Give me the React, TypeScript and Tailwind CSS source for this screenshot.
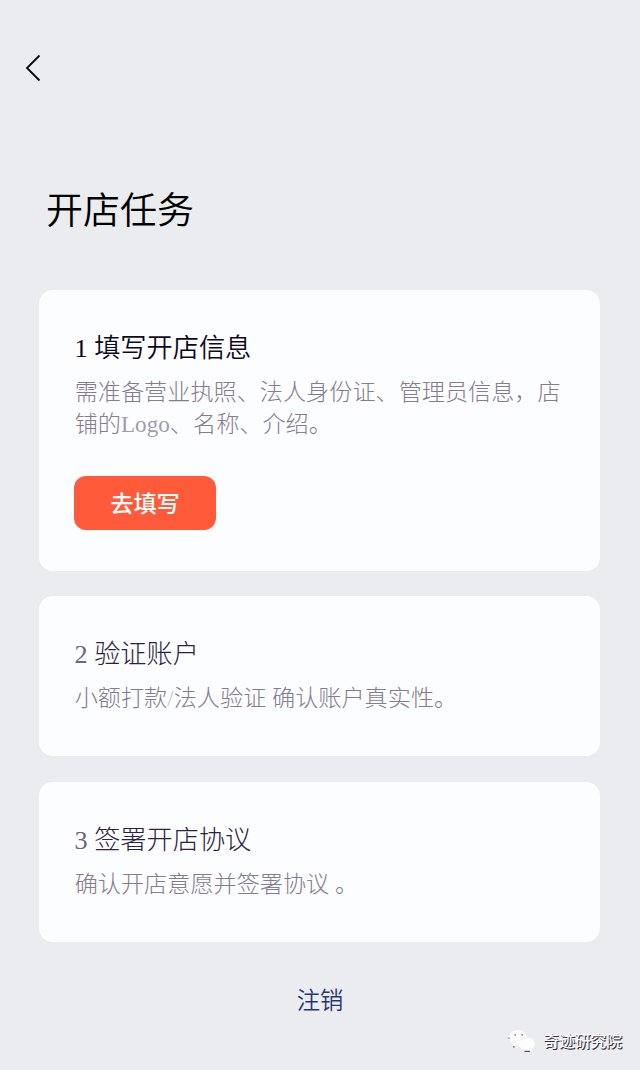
import React from 'react';

interface Task {
  number: string;
  title: string;
  lines: React.ReactNode[];
  action?: string;
}

const tasks: Task[] = [
  {
    number: '1',
    title: '填写开店信息',
    lines: [
      '需准备营业执照、法人身份证、管理员信息，店',
      <>
        铺的<span className="text-[#a39cac]">Logo</span>、名称、介绍。
      </>,
    ],
    action: '去填写',
  },
  {
    number: '2',
    title: '验证账户',
    lines: [
      <>
        小额打款<span className="text-[#c9c6d0]">/</span>法人验证 确认账户真实性。
      </>,
    ],
  },
  {
    number: '3',
    title: '签署开店协议',
    lines: ['确认开店意愿并签署协议 。'],
  },
];

function TaskCard({ task }: { task: Task }) {
  const active = Boolean(task.action);

  return (
    <section
      className={`rounded-[14px] bg-[#fcfdff] pl-[35px] pt-10 font-['Liberation_Serif','Noto_Sans_CJK_SC',serif] ${
        active ? 'h-[280.5px]' : 'h-[160px]'
      }`}
    >
      <h2
        className={`h-[38px] pl-[0.5px] text-[26.2px] leading-[38px] whitespace-nowrap ${
          active ? 'font-[350] text-[#0d0820]' : 'font-light text-[#2c2140]'
        }`}
      >
        <span className={active ? 'text-[#0d0820]' : 'text-[#6d6579]'}>{task.number}</span> {task.title}
      </h2>
      <div className="mt-2 pl-[0.7px] text-[23.15px] leading-[32px] font-extralight whitespace-nowrap text-[#857c8e]">
        {task.lines.map((line, index) => (
          <p key={index}>{line}</p>
        ))}
      </div>
      {task.action && (
        <button className="mt-[36px] flex h-[54px] w-[142px] items-center justify-center rounded-[12px] bg-[#ff5b3b] pt-[3px] text-[23.2px] leading-none font-medium text-white">
          {task.action}
        </button>
      )}
    </section>
  );
}

function WechatIcon() {
  return (
    <svg className="h-6 w-7" viewBox="0 0 28 24" fill="none">
      <path
        d="M10 1C4.8 1 1 4.5 1 8.8c0 2.5 1.3 4.6 3.2 6L3.6 18l3.2-1.8c1 .3 2.1.4 3.2.4 5.2 0 9-3.5 9-7.8S15.2 1 10 1Z"
        fill="#fdfdfe"
      />
      <path
        d="M19 8.5c-4.4 0-7.8 3-7.8 6.7 0 3.8 3.4 6.8 7.8 6.8.9 0 1.8-.1 2.6-.4l2.7 1.5-.6-2.5c1.900-1.3 3-3.2 3-5.4 0-3.7-3.4-6.7-7.7-6.7Z"
        fill="#fdfdfe"
      />
      <path d="M6.5 5.8h1.4M13.5 5.500l1.400.8M1 8.500v1.200M5 17.800h1.500M16.500 22.300h5.500" stroke="#55555f" strokeWidth="1.2" />
      <path d="M12 11.5c.8-1.4 2-2.3 3.5-2.8" stroke="#d9dade" strokeWidth=".7" />
    </svg>
  );
}

export default function App() {
  return (
    <div className="flex h-[1070px] w-[640px] flex-col bg-[#ebecef] font-['Noto_Sans_CJK_SC',sans-serif]">
      {/* Back */}
      <header className="pt-[54px] pl-[25px]">
        <button aria-label="返回" className="block">
          <svg className="h-7 w-4" viewBox="0 0 16 28" fill="none">
            <path d="M14.5 1.5L2 14l12.5 12.5" stroke="#08080c" strokeWidth="1.8" />
          </svg>
        </button>
      </header>

      <h1 className="mt-[98px] ml-[46px] h-[56px] text-[37px] leading-[56px] font-[350] text-black">开店任务</h1>

      {/* Task list */}
      <main className="mt-[54px] ml-[39px] flex w-[561px] flex-col gap-[25.7px]">
        {tasks.map((task) => (
          <TaskCard key={task.number} task={task} />
        ))}
      </main>

      <footer className="mt-10 flex flex-col">
        <button className="h-[34px] self-center text-[23.3px] leading-[34px] font-[350] text-[#263675]">注销</button>
        <div className="mt-[13px] flex items-center gap-2 self-end pr-[18px]">
          <WechatIcon />
          <span className="text-[15.7px] leading-6 font-medium text-[#fafafa] [text-shadow:1px_1px_0_#35323f,0.5px_0.5px_0_#35323f]">
            奇迹研究院
          </span>
        </div>
      </footer>
    </div>
  );
}
